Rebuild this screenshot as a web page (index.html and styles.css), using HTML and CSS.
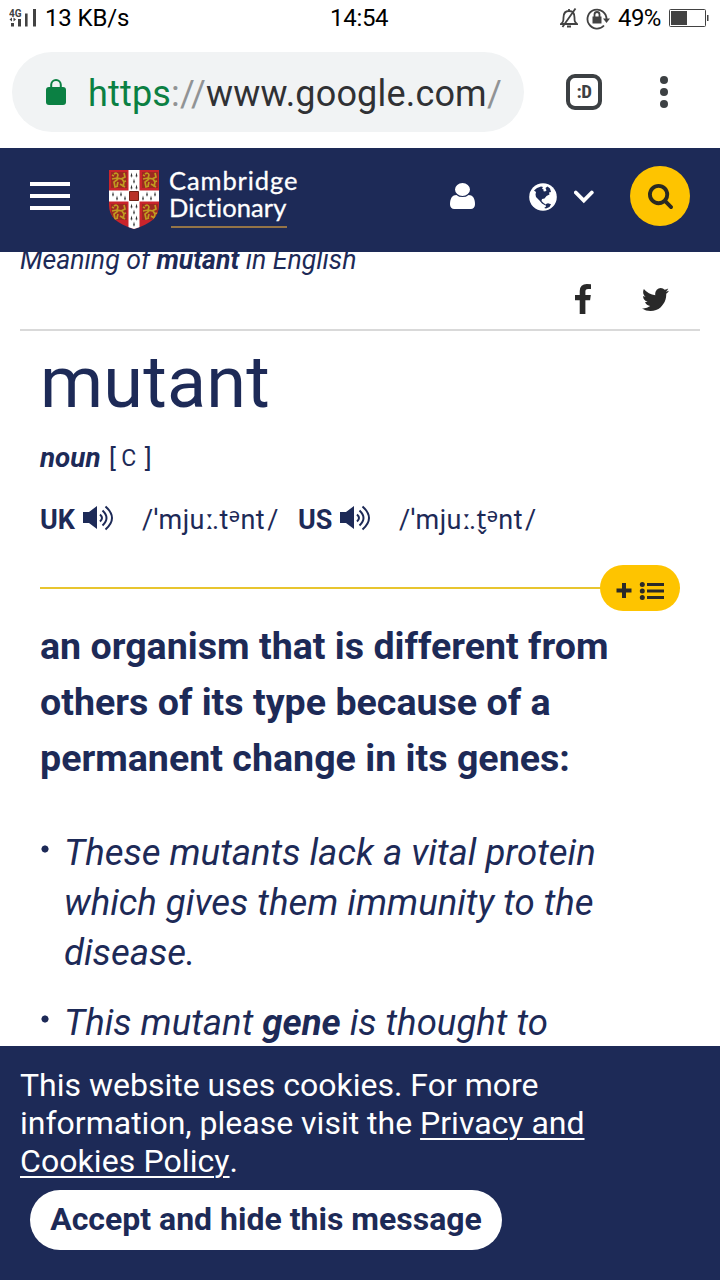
FILE: index.html
```html
<!DOCTYPE html>
<html lang="en">
<head>
<meta charset="utf-8">
<title>mutant – Cambridge Dictionary</title>
<link rel="stylesheet" href="styles.css">
</head>
<body>
<div class="status">
  <svg class="signal" viewBox="0 0 28 20" width="28" height="20">
    <text class="net" x="0" y="7.500">4G</text>
    <path d="M2 17.500v-3.500h3v3.500zM9 17.500v-7.500h3v7.500zM16 17.500v-13h2.600v13zM24 17.500v-17.500h3v17.500z"/>
    <path d="M.5 10.500l2.500-2v4zM7 10.500l-2.500-2v4z"/>
  </svg>
  <span class="speed">13 KB/s</span>
  <span class="clock">14:54</span>
  <svg class="bell" viewBox="0 0 18 20" width="18" height="20">
    <path class="line" d="M1 16h16c-2.500-2-2.500-3-2.500-6.500 0-4-2-6.500-5.500-6.500S3.500 5.500 3.500 9.500 3 14 1 16zM7 18.500h4M9 1v2M15.500 .5L2.500 19"/>
  </svg>
  <svg class="rotation" viewBox="0 0 24 22" width="24" height="22">
    <path class="line" d="M18 17.500A9.500 9.500 0 1 1 20.500 11"/>
    <path d="M17 10.500h7l-3.500 4.500z"/>
    <path d="M6.500 8.500h9v7h-9z"/>
    <path class="line" d="M8.500 9V6.500a2.500 2.500 0 0 1 5 0V9"/>
  </svg>
  <span class="percent">49%</span>
  <svg class="battery" viewBox="0 0 40 18" width="40" height="18">
    <rect class="case" x=".5" y=".5" width="36" height="17" rx="1"/>
    <path d="M2 2h16v14H2zM38 6h1.500v6H38z"/>
  </svg>
</div>

<div class="browser">
  <div class="address">
    <svg class="lock" viewBox="0 0 20 27" width="20" height="27">
      <rect y="8" width="20" height="18" rx="3"/>
      <path d="M5.200 9V5.800a4.800 4.800 0 0 1 9.600 0V9"/>
    </svg>
    <span class="url"><span class="scheme">https</span><span class="faint">://</span>www.google.com<span class="faint">/</span></span>
  </div>
  <div class="tabs">:D</div>
  <svg class="more" viewBox="0 0 8 34" width="8" height="34">
    <circle cx="4" cy="5" r="4"/><circle cx="4" cy="17" r="4"/><circle cx="4" cy="29" r="4"/>
  </svg>
</div>

<header class="site">
  <div class="menu"><i></i><i></i><i></i></div>
  <svg class="shield" viewBox="0 0 50 60" width="50" height="60">
    <defs>
      <clipPath id="outline"><path d="M0 1h50v35c0 12-8 19-25 24C8 55 0 48 0 36z"/></clipPath>
      <g id="lion">
        <path class="shade" d="M0 0h16v16H0z"/>
        <path class="limb" d="M3 2q3-2 4 1l-1 3 5 1 2 3-1 5M7 7l-4 3 1 5 3-1M6 6L1 7M10 7l4-2-1-4M9 12l5 3M3 4L1 3M12 10l3-1M7 10l-1 4"/>
      </g>
      <path id="ermine" d="M0-2.500L1 1.500 .4 1.300 0 3-.4 1.300-1 1.500z"/>
    </defs>
    <g clip-path="url(#outline)">
      <path class="red" d="M0 0h50v60H0z"/>
      <path class="white" d="M19.500 0h11v60h-11zM0 21.500h50v11H0z"/>
      <use href="#lion" x="2" y="3"/><use href="#lion" x="33" y="3"/>
      <use href="#lion" x="2" y="35"/><use href="#lion" x="33" y="35"/>
      <g class="spot">
        <use href="#ermine" x="22.500" y="6"/><use href="#ermine" x="27.500" y="6"/><use href="#ermine" x="25" y="12"/><use href="#ermine" x="22.500" y="18"/><use href="#ermine" x="27.500" y="18"/>
        <use href="#ermine" x="4" y="25"/><use href="#ermine" x="8" y="29"/><use href="#ermine" x="12" y="25"/><use href="#ermine" x="16" y="29"/>
        <use href="#ermine" x="34" y="29"/><use href="#ermine" x="38" y="25"/><use href="#ermine" x="42" y="29"/><use href="#ermine" x="46" y="25"/>
        <use href="#ermine" x="22.500" y="37"/><use href="#ermine" x="27.500" y="37"/><use href="#ermine" x="25" y="43"/><use href="#ermine" x="22.500" y="49"/><use href="#ermine" x="27.500" y="49"/><use href="#ermine" x="25" y="55"/>
      </g>
      <path class="book" d="M20.500 22.500h9v9h-9z"/>
    </g>
  </svg>
  <div class="brand"><span class="cambridge">Cambridge</span><span class="dictionary">Dictionary</span></div>
  <svg class="user" viewBox="256 128 1280 1536" width="25" height="26" preserveAspectRatio="none"><path d="M1536 1399q0 109-62.500 187t-150.500 78h-854q-88 0-150.500-78t-62.500-187q0-85 8.500-160.500t31.500-152 58.500-131 94-89 134.500-34.500q131 128 313 128t313-128q76 0 134.500 34.500t94 89 58.500 131 31.500 152 8.500 160.500zm-256-887q0 159-112.500 271.500t-271.500 112.500-271.500-112.500-112.500-271.500 112.500-271.500 271.500-112.500 271.500 112.500 112.500 271.500z"/></svg>
  <svg class="globe" viewBox="0 0 28 28" width="28" height="28">
    <circle cx="14" cy="14" r="13.800"/>
    <path class="land" d="M5 7.500L8 5l4-1.500 2 .5-1 1.500 2 1.500-1 1 2 .5 1.500-1-1-2.500 2-1.500 2.500 2 1 3.500-2 .5.500 2-3 1.500-2 2.500-2.500.5-.5 2 2 2 3 2-1 .5-3.500-2-2.500-3L7 14l-.5-2.500L7 9zM17 21l2-.7 3 1-1.500 2.700-3.500 1.500-1.800-.5 1.800-1.500z"/>
  </svg>
  <svg class="chevron" viewBox="0 0 20 14" width="20" height="14"><path d="M1.800 2.500l8 8.100 8-8.100"/></svg>
  <div class="search"><svg viewBox="64 128 1664 1664" width="25" height="25"><path d="M1216 832q0-185-131.500-316.500t-316.500-131.500-316.500 131.500-131.500 316.500 131.500 316.500 316.500 131.500 316.500-131.500 131.500-316.500zm512 832q0 52-38 90t-90 38q-54 0-90-38l-343-342q-179 124-399 124-143 0-273.500-55.500t-225-150-150-225-55.500-273.500 55.500-273.500 150-225 225-150 273.500-55.500 273.500 55.500 225 150 150 225 55.500 273.500q0 220-124 399l343 343q37 37 37 90z"/></svg></div>
</header>

<main>
  <div class="crumb">Meaning of <b>mutant</b> in English</div>
  <div class="share">
    <svg viewBox="479 0 864 1664" width="16" height="30" preserveAspectRatio="none"><path d="M1343 12v264h-157q-86 0-116 36t-30 108v189h293l-39 296h-254v759h-306v-759h-255v-296h255v-218q0-186 104-288.500t277-102.500q147 0 228 12z"/></svg>
    <svg viewBox="108 256 1576 1280" width="27" height="23" preserveAspectRatio="none"><path d="M1684 408q-67 98-162 167 1 14 1 42 0 130-38 259.500t-115.500 248.500-184.500 210.500-258 146-323 54.500q-271 0-496-145 35 4 78 4 225 0 401-138-105-2-188-64.500t-114-159.500q33 5 61 5 43 0 85-11-112-23-185.500-111.500t-73.500-205.500v-4q68 38 146 41-66-44-105-115t-39-154q0-88 44-163 121 149 294.500 238.500t371.500 99.500q-8-38-8-74 0-134 94.500-228.500t228.500-94.500q140 0 236 102 109-21 205-78-37 115-142 178 93-10 186-50z"/></svg>
  </div>
  <article>
    <h1>mutant</h1>
    <div class="pos"><b>noun</b><span class="gram">[ <small>C</small> ]</span></div>
    <div class="pron">
      <b class="uk">UK</b>
      <svg class="speaker" viewBox="0 0 31 26" width="31" height="26"><path class="cone" d="M0 7h6l8-6v23l-8-6H0z"/><path d="M17 9.500q4 3.500 0 7M19.500 5.500q8 7.500 0 15M22.500 1.500q13 11.500 0 23"/></svg>
      <span class="ipa">/ˈmju<span class="long">ː</span>.t<sup>ə</sup>nt<span class="slash">/</span></span>
      <b class="us">US</b>
      <svg class="speaker" viewBox="0 0 31 26" width="31" height="26"><path class="cone" d="M0 7h6l8-6v23l-8-6H0z"/><path d="M17 9.500q4 3.500 0 7M19.500 5.500q8 7.500 0 15M22.500 1.500q13 11.500 0 23"/></svg>
      <span class="ipa">/ˈmju<span class="long">ː</span>.t̬<sup>ə</sup>nt<span class="slash">/</span></span>
    </div>
    <div class="divider">
      <div class="add"><svg viewBox="0 0 48 18" width="48" height="18"><path d="M6 1h4v5.500h5.500v4H10V16H6v-5.500H.5v-4H6zM31 1h17v3H31zM31 7.500h17v3H31zM31 14h17v3H31z"/><circle cx="26.300" cy="2.500" r="2.500"/><circle cx="26.300" cy="9" r="2.500"/><circle cx="26.300" cy="15.500" r="2.500"/></svg></div>
    </div>
    <h2>an organism that is different from<br>others of its type because of a<br>permanent change in its genes:</h2>
    <ul>
      <li>These mutants lack a vital protein<br>which gives them immunity to the<br>disease.</li>
      <li>This mutant <b>gene</b> is thought to</li>
    </ul>
  </article>
</main>

<footer class="cookies">
  <p>This website uses cookies. For more<br>information, please visit the <u>Privacy and</u><br><u class="policy">Cookies Policy</u>.</p>
  <button>Accept and hide this message</button>
</footer>
</body>
</html>
```

FILE: styles.css
```css
* { box-sizing: border-box; }
body {
  margin: 0;
  width: 720px;
  height: 1280px;
  overflow: hidden;
  display: flex;
  flex-direction: column;
  background: #fff;
  color: #1d2a57;
  font-family: Roboto, "Noto Sans", sans-serif;
  white-space: nowrap;
}
svg { display: block; flex: none; }

.status {
  height: 52px;
  flex: none;
  display: flex;
  align-items: flex-start;
  padding: 8px 11px 0 9px;
  color: #000;
  font-size: 24px;
  line-height: 20px;
}
.status svg { fill: #424242; }
.status .line { fill: none; stroke: #424242; stroke-width: 1.800; }
.signal { margin-top: 1px; }
.net { font: bold 10px Roboto, sans-serif; }
.speed { margin-left: 8px; width: 285px; letter-spacing: -.15px; }
.clock { width: 230px; letter-spacing: -.3px; }
.bell { margin-right: 8px; }
.rotation { margin-right: 8px; }
.percent { width: 51px; letter-spacing: -.6px; }
.battery { margin-top: 1px; }
.battery .case { fill: none; stroke: #424242; }

.browser {
  height: 96px;
  flex: none;
  display: flex;
  align-items: flex-start;
  padding-left: 12px;
}
.address {
  width: 512px;
  height: 80px;
  border-radius: 40px;
  background: #f1f3f4;
  display: flex;
  align-items: center;
  padding-left: 34px;
}
.lock { fill: #0b8043; }
.lock path { fill: none; stroke: #0b8043; stroke-width: 2; }
.url { margin: 4px 0 0 22px; font-size: 36px; line-height: 42px; color: #303134; letter-spacing: .18px; }
.scheme { color: #0b8043; }
.faint { color: #919395; }
.tabs {
  width: 36px;
  height: 36px;
  margin: 22px 0 0 42px;
  border: 4px solid #3c4043;
  border-radius: 9px;
  color: #3c4043;
  font: bold 19px/28px "Roboto Condensed", Roboto, sans-serif;
  text-align: center;
  letter-spacing: -.5px;
}
.more { margin: 23px 0 0 58px; fill: #3c4043; }

.site {
  height: 104px;
  flex: none;
  background: #1d2a57;
  display: flex;
  align-items: flex-start;
  padding: 18px 30px 0;
  color: #fff;
  position: relative;
}
.menu { width: 40px; margin-top: 16px; display: grid; gap: 8px; }
.menu i { height: 4px; background: #fff; }
.shield { margin: 3px 0 0 39px; }
.red { fill: #c9242b; }
.white { fill: #fff; }
.shade { fill: #9c2a20; }
.limb { fill: none; stroke: #c09a20; stroke-width: 1.700; }
.spot { fill: #333; }
.book { fill: #b83328; stroke: #712116; }
.brand {
  width: 116px;
  margin: 1px 0 0 12px;
  height: 61px;
  border-bottom: 2px solid #947447;
  font: 25.500px/27px Lato, sans-serif;
}
.brand span { display: block; margin-left: -2px; -webkit-text-stroke: .3px #fff; }
.cambridge { letter-spacing: .9px; }
.dictionary { letter-spacing: .1px; }
.user { margin: 17px 0 0 163px; fill: #fff; }
.globe { margin: 17px 0 0 54px; fill: #fff; }
.land { fill: #1d2a57; }
.chevron { margin: 24px 0 0 17px; fill: none; stroke: #fff; stroke-width: 3.800; stroke-linecap: round; }
.search {
  width: 60px;
  height: 60px;
  margin-left: auto;
  border-radius: 50%;
  background: #fec400;
  display: grid;
  place-items: center;
}
.search svg { fill: #2a2a22; }

main { flex: 1; min-height: 0; overflow: hidden; padding: 0 20px; }
.crumb { height: 24px; font-size: 26.650px; font-style: italic; line-height: 32px; margin-top: -8px; }
.share {
  height: 63px;
  border-bottom: 2px solid #d9d9d9;
  display: flex;
  align-items: center;
  justify-content: flex-end;
  gap: 51px;
  padding: 1px 31px 0 0;
}
.share svg { fill: #292929; }
article { padding: 0 20px; }
h1 { margin: 10px 0 0; font-size: 72px; line-height: 84px; font-weight: 400; letter-spacing: .2px; }
.pos { display: flex; margin-top: 17px; font-size: 26px; line-height: 32px; }
.pos b { font-style: italic; width: 69px; font-size: 27.800px; }
.gram { word-spacing: -1px; }
.gram small { font-size: 23px; margin-right: 3px; position: relative; top: -1px; }
.pron { display: flex; height: 32px; margin-top: 28px; font-size: 27px; line-height: 32px; }
.uk { width: 43px; }
.us { width: 42px; }
.speaker { margin-top: 1px; fill: none; stroke: #1d2a57; stroke-width: 2; }
.cone { fill: #1d2a57; stroke: none; }
.ipa { width: 184px; padding-left: 28px; letter-spacing: .5px; }
.ipa sup { font-size: 21px; line-height: 0; vertical-align: 7px; }
.long { letter-spacing: -1.800px; }
.slash { margin-left: 2px; }
.divider {
  height: 46px;
  margin-top: 29px;
  display: flex;
  justify-content: flex-end;
  background: linear-gradient(#e8c52f, #e8c52f) 0 22px / 100% 2px no-repeat;
}
.add {
  width: 80px;
  height: 46px;
  border-radius: 23px;
  background: #fec400;
  display: grid;
  place-items: center;
  padding-top: 5px;
}
.add svg { fill: #292929; }
h2 { margin: 7px 0 0; font-size: 37.600px; line-height: 56px; font-weight: 700; }
ul { margin: 42px 0 0; padding: 0; list-style: none; font-size: 36.550px; line-height: 50px; font-style: italic; }
li { margin-bottom: 20px; padding-left: 24px; background: radial-gradient(circle, #1d2a57 3.200px, transparent 3.900px) 0 16px / 10px 10px no-repeat; }

.cookies { height: 234px; flex: none; background: #1d2a57; color: #fff; padding: 20px; }
.cookies p { margin: 0; font-size: 32px; line-height: 38px; }
.cookies u { text-decoration-thickness: 2px; text-underline-offset: 4px; }
.cookies .policy { letter-spacing: .08px; }
button {
  display: block;
  width: 472px;
  height: 60px;
  margin: 10px 0 0 10px;
  padding: 0 0 2px;
  border: 0;
  border-radius: 30px;
  background: #fff;
  color: #1d2a57;
  font: bold 32px/58px Roboto, sans-serif;
}
```
